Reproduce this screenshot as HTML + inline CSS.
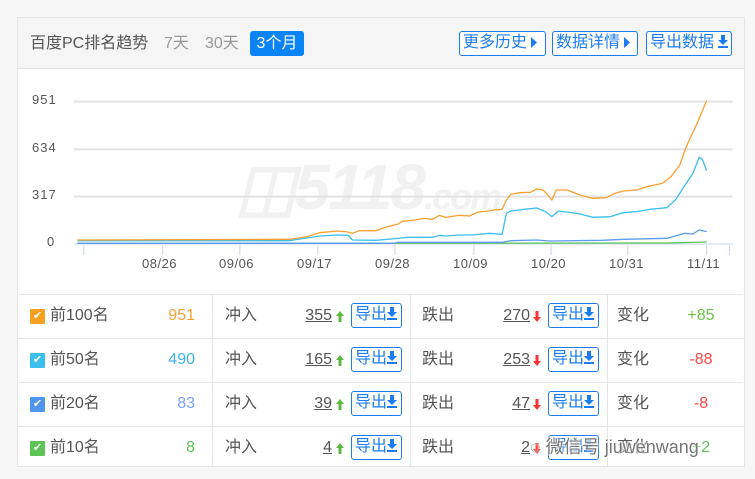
<!DOCTYPE html>
<html><head><meta charset="utf-8"><style>
*{margin:0;padding:0;box-sizing:border-box}
body{width:755px;height:479px;background:#f7f7f7;position:relative;overflow:hidden;font-family:"Liberation Sans","Noto Sans CJK SC",sans-serif;color:#555}
.card{position:absolute;left:17px;top:17px;width:728px;height:450px;background:#fff;border:1px solid #e6e6e6}
.hd{position:absolute;left:0;top:0;width:726px;height:51px;background:#f5f5f5;border-bottom:1px solid #e4e4e4}
.abs{position:absolute;white-space:nowrap}
.t{font-size:16px;line-height:20px}
.btn{position:absolute;border:1px solid #1a7cf0;border-radius:3px;color:#1a7cf0;font-size:16px;line-height:22px;height:25px;padding-left:3px;background:#fff;white-space:nowrap}
.row{position:absolute;left:0;width:726px;border-top:1px solid #e6e6e6}
.vd{position:absolute;width:1px;height:173px;background:#e6e6e6}
.cb{position:absolute;width:15px;height:15px;border-radius:1px;color:#fff;font-size:11px;line-height:15px;text-align:center}
.ex{position:absolute;width:51px;height:25px;border:1px solid #1a7cf0;border-radius:3px;color:#1a7cf0;font-size:16px;line-height:22px;padding-left:3px;white-space:nowrap}
.num{position:absolute;text-align:right;font-size:16px;line-height:20px;text-decoration:underline;color:#555}
svg.i{display:inline-block;vertical-align:-1px}
.ar{position:absolute}
</style></head><body>
<div class="card">
<div class="hd">
<div class="abs t" style="left:12px;top:16px;color:#555">百度PC排名趋势</div>
<div class="abs t" style="left:146px;top:16px;color:#999">7天</div>
<div class="abs t" style="left:187px;top:16px;color:#999">30天</div>
<div class="abs t" style="left:232px;top:13px;width:54px;height:25px;background:#0a84f5;border-radius:3px;color:#fff;text-align:center;line-height:25px">3个月</div>
<div class="btn" style="left:441px;top:13px;width:87px">更多历史 <svg class="i" width="6" height="11"><path d="M0 0L6 5.5 0 11z" fill="#1a7cf0"/></svg></div>
<div class="btn" style="left:534px;top:13px;width:86px">数据详情 <svg class="i" width="6" height="11"><path d="M0 0L6 5.5 0 11z" fill="#1a7cf0"/></svg></div>
<div class="btn" style="left:628px;top:13px;width:86px">导出数据 <svg class="i" width="10" height="13"><path d="M3 0h4v5h3l-5 5-5-5h3zM0 11h10v2H0z" fill="#1a7cf0"/></svg></div>
</div>
</div>
<div class="abs" style="left:236px;top:150px;font-size:64px;font-style:italic;font-weight:bold;color:#f1f1f1;letter-spacing:-2px">&#9707;5118<span style="font-size:36px">.com</span></div>
<svg style="position:absolute;left:60px;top:80px" width="680" height="210" viewBox="0 0 1569 630" preserveAspectRatio="none">
<g stroke="#e2e2e2" stroke-width="2">
<line x1="32" y1="65" x2="1552" y2="65" vector-effect="non-scaling-stroke"/>
<line x1="32" y1="208" x2="1552" y2="208" vector-effect="non-scaling-stroke"/>
<line x1="32" y1="350" x2="1552" y2="350" vector-effect="non-scaling-stroke"/>
</g>
<g fill="none" stroke="#c8d6e8" stroke-width="1">
<line x1="32" y1="492" x2="1552" y2="492" vector-effect="non-scaling-stroke"/>
<path d="M55,495V525M237,495V525M415,495V525M595,495V525M773,495V525M955,495V525M1133,495V525M1310,495V525M1492,495V525M1545,495V525" vector-effect="non-scaling-stroke"/>
</g>
<g fill="none" stroke-width="1.3" stroke-linejoin="round">
<path vector-effect="non-scaling-stroke" stroke="#5cc454" d="M40,490 L1400,489 L1492,486"/>
<path vector-effect="non-scaling-stroke" stroke="#5b9cf0" d="M40,490 L770,490 780,487 1020,487 1040,482 1100,480 1130,483 1250,481 1300,478 1400,475 1420,468 1440,460 1460,462 1475,450 1492,455"/>
<path vector-effect="non-scaling-stroke" stroke="#3bbfee" d="M40,482 L530,482 L560,476 600,468 640,465 665,466 L675,480 730,481 780,475 800,472 860,472 875,466 890,468 920,465 950,465 990,460 1020,463 1030,400 1040,393 1070,388 1100,384 1120,395 1135,410 1150,393 1180,398 1200,402 1230,412 1270,410 1300,398 1330,395 1360,388 1400,383 1420,360 1440,320 1460,280 1475,232 1482,238 1492,272"/>
<path vector-effect="non-scaling-stroke" stroke="#f7a030" d="M40,480 L530,478 L570,470 600,458 640,453 L660,455 675,460 690,452 730,452 750,442 780,432 790,424 820,420 840,415 860,418 875,406 890,412 920,406 945,408 965,396 990,393 1000,390 1020,388 1030,360 1040,343 1060,338 1085,337 1100,327 1115,330 1125,345 1135,360 1145,330 1170,330 1200,345 1230,355 1260,353 1280,340 1300,333 1330,330 1360,318 1390,310 1410,290 1430,255 1445,200 1470,130 1492,62"/>
</g>
</svg>
<div class="abs" style="left:32px;top:92px;font-size:13px;color:#555;letter-spacing:1px">951</div>
<div class="abs" style="left:32px;top:140px;font-size:13px;color:#555;letter-spacing:1px">634</div>
<div class="abs" style="left:32px;top:187px;font-size:13px;color:#555;letter-spacing:1px">317</div>
<div class="abs" style="left:47px;top:234px;font-size:13px;color:#555">0</div>
<div class="abs" style="left:142px;top:256px;font-size:13px;color:#555;letter-spacing:.5px">08/26</div>
<div class="abs" style="left:219px;top:256px;font-size:13px;color:#555;letter-spacing:.5px">09/06</div>
<div class="abs" style="left:297px;top:256px;font-size:13px;color:#555;letter-spacing:.5px">09/17</div>
<div class="abs" style="left:375px;top:256px;font-size:13px;color:#555;letter-spacing:.5px">09/28</div>
<div class="abs" style="left:453px;top:256px;font-size:13px;color:#555;letter-spacing:.5px">10/09</div>
<div class="abs" style="left:531px;top:256px;font-size:13px;color:#555;letter-spacing:.5px">10/20</div>
<div class="abs" style="left:609px;top:256px;font-size:13px;color:#555;letter-spacing:.5px">10/31</div>
<div class="abs" style="left:687px;top:256px;font-size:13px;color:#555;letter-spacing:.5px">11/11</div>

<div style="position:absolute;left:17px;top:0">
<div class="row" style="top:294px;height:1px"></div>
<div class="row" style="top:338px;height:1px"></div>
<div class="row" style="top:382px;height:1px"></div>
<div class="row" style="top:426px;height:1px"></div>
</div>
<div class="vd" style="left:212px;top:294px"></div>
<div class="vd" style="left:410px;top:294px"></div>
<div class="vd" style="left:607px;top:294px"></div>

<div style="position:absolute;left:0;top:0">
<!-- row 1 -->
<div class="cb" style="left:30px;top:309px;background:#f5a020">&#10004;</div>
<div class="abs t" style="left:50px;top:306px">前100名</div>
<div class="abs t" style="left:150px;top:306px;width:45px;text-align:right;color:#f7a030">951</div>
<div class="abs t" style="left:225px;top:306px">冲入</div>
<div class="num" style="left:280px;top:306px;width:52px">355</div>
<svg class="ar" style="left:336px;top:311px" width="8" height="11"><path d="M4 0L8 5H5.5V11H2.5V5H0z" fill="#5cb83c"/></svg>
<div class="ex" style="left:351px;top:303px">导出<svg class="i" width="10" height="13"><path d="M3 0h4v5h3l-5 5-5-5h3zM0 11h10v2H0z" fill="#1a7cf0"/></svg></div>
<div class="abs t" style="left:422px;top:306px">跌出</div>
<div class="num" style="left:478px;top:306px;width:52px">270</div>
<svg class="ar" style="left:533px;top:311px" width="8" height="11"><path d="M4 11L8 6H5.5V0H2.5V6H0z" fill="#f33"/></svg>
<div class="ex" style="left:548px;top:303px">导出<svg class="i" width="10" height="13"><path d="M3 0h4v5h3l-5 5-5-5h3zM0 11h10v2H0z" fill="#1a7cf0"/></svg></div>
<div class="abs t" style="left:617px;top:306px">变化</div>
<div class="abs t" style="left:670px;top:306px;width:62px;text-align:center;color:#6cc24a">+85</div>
<!-- row 2 -->
<div class="cb" style="left:30px;top:353px;background:#3bbfee">&#10004;</div>
<div class="abs t" style="left:50px;top:350px">前50名</div>
<div class="abs t" style="left:150px;top:350px;width:45px;text-align:right;color:#3db4e8">490</div>
<div class="abs t" style="left:225px;top:350px">冲入</div>
<div class="num" style="left:280px;top:350px;width:52px">165</div>
<svg class="ar" style="left:336px;top:355px" width="8" height="11"><path d="M4 0L8 5H5.5V11H2.5V5H0z" fill="#5cb83c"/></svg>
<div class="ex" style="left:351px;top:347px">导出<svg class="i" width="10" height="13"><path d="M3 0h4v5h3l-5 5-5-5h3zM0 11h10v2H0z" fill="#1a7cf0"/></svg></div>
<div class="abs t" style="left:422px;top:350px">跌出</div>
<div class="num" style="left:478px;top:350px;width:52px">253</div>
<svg class="ar" style="left:533px;top:355px" width="8" height="11"><path d="M4 11L8 6H5.5V0H2.5V6H0z" fill="#f33"/></svg>
<div class="ex" style="left:548px;top:347px">导出<svg class="i" width="10" height="13"><path d="M3 0h4v5h3l-5 5-5-5h3zM0 11h10v2H0z" fill="#1a7cf0"/></svg></div>
<div class="abs t" style="left:617px;top:350px">变化</div>
<div class="abs t" style="left:670px;top:350px;width:62px;text-align:center;color:#f44">-88</div>
<!-- row 3 -->
<div class="cb" style="left:30px;top:397px;background:#4f95ee">&#10004;</div>
<div class="abs t" style="left:50px;top:394px">前20名</div>
<div class="abs t" style="left:150px;top:394px;width:45px;text-align:right;color:#7a9ff0">83</div>
<div class="abs t" style="left:225px;top:394px">冲入</div>
<div class="num" style="left:280px;top:394px;width:52px">39</div>
<svg class="ar" style="left:336px;top:399px" width="8" height="11"><path d="M4 0L8 5H5.5V11H2.5V5H0z" fill="#5cb83c"/></svg>
<div class="ex" style="left:351px;top:391px">导出<svg class="i" width="10" height="13"><path d="M3 0h4v5h3l-5 5-5-5h3zM0 11h10v2H0z" fill="#1a7cf0"/></svg></div>
<div class="abs t" style="left:422px;top:394px">跌出</div>
<div class="num" style="left:478px;top:394px;width:52px">47</div>
<svg class="ar" style="left:533px;top:399px" width="8" height="11"><path d="M4 11L8 6H5.5V0H2.5V6H0z" fill="#f33"/></svg>
<div class="ex" style="left:548px;top:391px">导出<svg class="i" width="10" height="13"><path d="M3 0h4v5h3l-5 5-5-5h3zM0 11h10v2H0z" fill="#1a7cf0"/></svg></div>
<div class="abs t" style="left:617px;top:394px">变化</div>
<div class="abs t" style="left:670px;top:394px;width:62px;text-align:center;color:#f44">-8</div>
<!-- row 4 -->
<div class="cb" style="left:30px;top:441px;background:#5cc454">&#10004;</div>
<div class="abs t" style="left:50px;top:438px">前10名</div>
<div class="abs t" style="left:150px;top:438px;width:45px;text-align:right;color:#5cc454">8</div>
<div class="abs t" style="left:225px;top:438px">冲入</div>
<div class="num" style="left:280px;top:438px;width:52px">4</div>
<svg class="ar" style="left:336px;top:443px" width="8" height="11"><path d="M4 0L8 5H5.5V11H2.5V5H0z" fill="#5cb83c"/></svg>
<div class="ex" style="left:351px;top:435px">导出<svg class="i" width="10" height="13"><path d="M3 0h4v5h3l-5 5-5-5h3zM0 11h10v2H0z" fill="#1a7cf0"/></svg></div>
<div class="abs t" style="left:422px;top:438px">跌出</div>
<div class="num" style="left:478px;top:438px;width:52px">2</div>
<svg class="ar" style="left:533px;top:443px" width="8" height="11"><path d="M4 11L8 6H5.5V0H2.5V6H0z" fill="#f33"/></svg>
<div class="ex" style="left:548px;top:435px">导出<svg class="i" width="10" height="13"><path d="M3 0h4v5h3l-5 5-5-5h3zM0 11h10v2H0z" fill="#1a7cf0"/></svg></div>
<div class="abs t" style="left:617px;top:438px">变化</div>
<div class="abs t" style="left:670px;top:438px;width:62px;text-align:center;color:#5cc454">+2</div>
<div class="abs" style="left:530px;top:433px;font-size:18px;color:#777;text-shadow:0 0 2px #fff,0 0 2px #fff,0 0 3px #fff">◌ 微信号 jiuwenwang</div>
</div>
</body></html>
